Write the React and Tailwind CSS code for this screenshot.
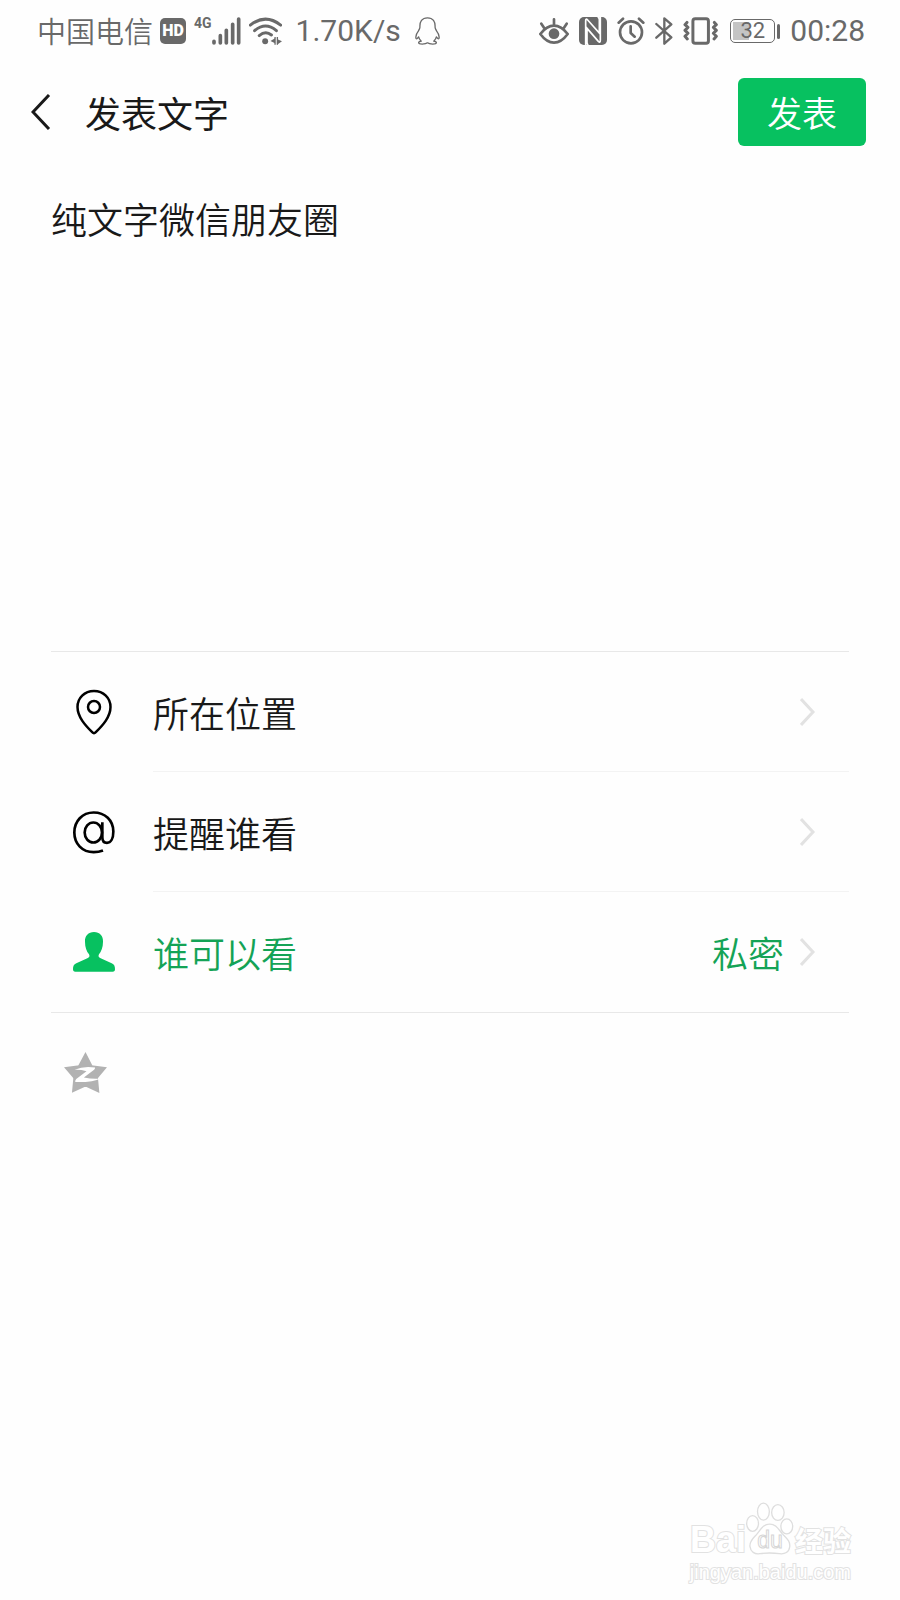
import { useState } from 'react';
import { clsx } from 'clsx';

const CJK = 'font-["Noto_Sans_CJK_SC",sans-serif]';
const LATIN = 'font-[Roboto,sans-serif]';

function SignalIcon() {
  return (
    <svg viewBox="0 0 87 84" className="h-7 w-[29px]" stroke="currentColor" strokeWidth="11" strokeLinecap="round" aria-hidden="true">
      <path d="M6 73v5M25 56v22M43 40v38M62 22v56M80 6v72" />
    </svg>
  );
}

function WifiIcon() {
  return (
    <svg viewBox="0 0 100 84" className="h-7 w-[33px]" fill="none" stroke="currentColor" aria-hidden="true">
      <path d="M4 24Q50-12 96 24M17 41Q50 13 83 41M31 56Q50 40 68 54" strokeWidth="9" strokeLinecap="round" />
      <circle cx="49" cy="73" r="9" fill="currentColor" stroke="none" />
      <path d="M79 60v24M86 60v24" strokeWidth="4" />
      <path d="M79 64v15L65 72zM86 67v16l14-10z" fill="currentColor" stroke="none" />
    </svg>
  );
}

function PenguinIcon() {
  return (
    <svg viewBox="0 0 76 84" className="h-7 w-[25px]" fill="none" stroke="currentColor" strokeWidth="4" strokeLinejoin="round" aria-hidden="true">
      <path d="M38 2C21 2 14 14 15 30c0 5-3 7-4 11C5 49 1 56 3 64c1 3 4 2 8-4 1 5 4 9 8 13-6 1-8 3-8 5 0 5 21 5 27 0 6 5 27 5 27 0 0-2-2-4-8-5 4-4 7-8 8-13 4 6 7 7 8 4 2-8-2-15-8-23-1-4-4-6-4-11C62 14 55 2 38 2z" />
    </svg>
  );
}

function EyeIcon() {
  return (
    <svg viewBox="0 0 90 84" className="h-7 w-[30px]" fill="none" stroke="currentColor" strokeWidth="8" strokeLinecap="round" aria-hidden="true">
      <path d="M4 51Q23 26 45 26t41 25Q67 77 45 77T4 51zM45 25V7M15 32L7 20M75 32l8-12" />
      <circle cx="45" cy="50" r="16" fill="currentColor" stroke="none" />
    </svg>
  );
}

function NfcIcon() {
  return (
    <svg viewBox="0 0 84 84" className="size-7" aria-hidden="true">
      <rect width="84" height="84" rx="15" fill="currentColor" />
      <path d="M20 84V12Q20 3 26 9l35 39V8Q61 2 56 0M28 84q-4-2-4-8V34l34 39q6 6 6-4V0" fill="none" stroke="#fff" strokeWidth="5" />
    </svg>
  );
}

function AlarmIcon() {
  return (
    <svg viewBox="0 0 84 84" className="size-7" fill="none" stroke="currentColor" strokeWidth="8" strokeLinecap="round" strokeLinejoin="round" aria-hidden="true">
      <circle cx="42" cy="46" r="33" />
      <path d="M41 28v20l12 11M5 17L18 5M79 17L66 5" />
    </svg>
  );
}

function BluetoothIcon() {
  return (
    <svg viewBox="0 0 54 84" className="h-7 w-[18px]" fill="none" stroke="currentColor" strokeWidth="7" strokeLinecap="round" strokeLinejoin="round" aria-hidden="true">
      <path d="M4 21l45 40-21 19V4l21 18L4 62" />
    </svg>
  );
}

function VibrateIcon() {
  return (
    <svg viewBox="0 0 106 84" className="h-7 w-[35px]" fill="none" stroke="currentColor" strokeWidth="9" strokeLinecap="round" strokeLinejoin="round" aria-hidden="true">
      <rect x="30" y="5" width="47" height="74" rx="7" />
      <path d="M12 16l-6 7 9 8-9 9 9 9-9 9 7 8M95 16l6 7-9 8 9 9-9 9 9 9-7 8" />
    </svg>
  );
}

function Battery({ level }) {
  return (
    <div className="ml-[2px] flex items-center gap-[2px]">
      <div className="relative flex h-6 w-[45px] items-center justify-center rounded-[5px] border border-[#696969]">
        <span className="absolute inset-y-[2px] left-[2px] border-r-2 border-[#c4c4c4] bg-[#c4c4c4]" style={{ width: `${level + 5}%` }} />
        <span className="relative text-[22px] leading-none">{level}</span>
      </div>
      <span className="h-[15px] w-[3px] rounded-xs bg-current" />
    </div>
  );
}

function StatusBar() {
  return (
    <div className={clsx(LATIN, 'flex h-[62px] items-center justify-between pr-[35px] pl-[37px] text-[30px] font-normal text-[#696969]')}>
      <div className="flex items-center">
        <span className={clsx(CJK, 'pb-[2px] text-[29px] leading-[42px] font-[350]')}>中国电信</span>
        <span className="ml-[7px] flex size-[26px] items-center justify-center rounded-[5px] bg-[#696969] text-base font-black text-white">HD</span>
        <span className="ml-2 pb-4 text-sm leading-none font-bold">4G</span>
        <SignalIcon />
        <span className="ml-2 flex">
          <WifiIcon />
        </span>
        <span className="mx-[14px] leading-10">1.70K/s</span>
        <PenguinIcon />
      </div>
      <div className="flex items-center gap-[10px]">
        <EyeIcon />
        <NfcIcon />
        <AlarmIcon />
        <BluetoothIcon />
        <VibrateIcon />
        <Battery level={32} />
        <span className="leading-10">00:28</span>
      </div>
    </div>
  );
}

function BackIcon() {
  return (
    <svg viewBox="0 0 20 36" className="h-9 w-5" fill="none" stroke="currentColor" strokeWidth="3" aria-hidden="true">
      <path d="M18 1L2 18l16 17" />
    </svg>
  );
}

function ChevronIcon() {
  return (
    <svg viewBox="0 0 16 28" className="h-7 w-4 text-[#e2e2e2]" fill="none" stroke="currentColor" strokeWidth="3" aria-hidden="true">
      <path d="M1 1l12 13-12 13" />
    </svg>
  );
}

function PinIcon() {
  return (
    <svg viewBox="0 0 36 46" className="h-[46px] w-9" fill="none" stroke="#000" strokeWidth="2.5" strokeLinejoin="round" aria-hidden="true">
      <path d="M18 2C8.500 2 1.500 9 1.500 18c0 10 8 18.500 14.700 25.200q1.800 2 3.600 0C26.500 36.500 34.500 28 34.500 18 34.500 9 27.500 2 18 2z" />
      <circle cx="18" cy="18" r="6" />
    </svg>
  );
}

function MentionIcon() {
  return (
    <svg viewBox="0 0 126 128" className="h-[43px] w-[42px]" fill="none" stroke="#000" strokeWidth="8" aria-hidden="true">
      <path d="M90 118Q77 123 62 123C28 123 4 98 4 64S28 4 62 4s59 23 59 57c0 22-8 34-19 34-10 0-14-7-14-17V33" />
      <ellipse cx="61" cy="64" rx="26" ry="30" />
    </svg>
  );
}

function PersonIcon() {
  return (
    <svg viewBox="0 0 126 120" className="h-10 w-[42px]" fill="#07c160" aria-hidden="true">
      <path d="M63 0c17 0 28 12 27 29 0 17-5 29-12 38-3 6-1 9 5 12l33 15c8 4 10 9 10 18 0 5-2 7-7 7H7c-5 0-7-2-7-7 0-9 2-14 10-18l33-15c6-3 8-6 5-12-7-9-12-21-12-38C35 12 46 0 63 0z" />
    </svg>
  );
}

function QzoneIcon() {
  return (
    <svg viewBox="0 0 130 124" className="h-[41px] w-[43px]" aria-hidden="true">
      <path d="M65 0l20 39q1 2 4 2l41 5-26 31q-2 2-1 5l4 42-39-18q-3-1-6 0l-38 17 4-42q0-3-2-5L0 46l40-5q3 0 4-2z" fill="#b2b2b2" />
      <path d="M32 54Q60 41 94 47q0 4-3 7L60 77q26 5 50 3-20 12-76 11-1-5 3-9l31-24q-18-5-36-4z" fill="#fff" />
    </svg>
  );
}

const ROWS = [
  { id: 'location', label: '所在位置', Icon: PinIcon },
  { id: 'remind', label: '提醒谁看', Icon: MentionIcon },
  { id: 'visible', label: '谁可以看', Icon: PersonIcon, value: '私密', active: true },
];

function OptionRow({ label, Icon, value, active, last }) {
  return (
    <li>
      <button type="button" className={clsx('flex w-full items-center text-left', active ? 'text-[#14a356]' : 'text-[#191919]')}>
        <span className="flex w-[86px] shrink-0 justify-center">
          <Icon />
        </span>
        <span className={clsx('ml-4 flex h-[120px] flex-1 items-center pr-[33px]', !last && 'border-b border-[#f3f3f3]')}>
          <span className="flex-1">{label}</span>
          {value && <span className="mr-4">{value}</span>}
          <ChevronIcon />
        </span>
      </button>
    </li>
  );
}

// Brand mark in the bottom corner, white letters with a faint outline
function Watermark() {
  return (
    <footer className="mt-auto flex flex-col items-end pr-[49px] pb-[14px] text-white [paint-order:stroke_fill] [-webkit-text-stroke:2px_#e2e2e2]">
      <div className="flex items-end">
        <span className='font-["Liberation_Sans",sans-serif] text-[36px] leading-9 font-bold'>Bai</span>
        <span className="relative flex h-14 w-12 items-end justify-center">
          <svg viewBox="0 0 146 168" className="absolute inset-0 h-full w-full [paint-order:normal]" fill="#fff" stroke="#dedede" strokeWidth="4" aria-hidden="true">
            <ellipse cx="20" cy="64" rx="18" ry="24" />
            <ellipse cx="53" cy="28" rx="18" ry="26" />
            <ellipse cx="97" cy="31" rx="19" ry="24" />
            <ellipse cx="124" cy="73" rx="18" ry="23" />
            <path d="M72 66c20 0 27 16 38 29 14 15 25 22 23 40-2 17-15 23-31 21-22-3-38-3-60 0-16 2-28-5-30-22-2-17 11-25 23-40 11-14 19-28 37-28z" />
          </svg>
          <span className='relative pb-[6px] font-["Liberation_Sans",sans-serif] text-[23px] leading-6 [paint-order:normal] [-webkit-text-stroke:1px_#d6d6d6]'>du</span>
        </span>
        <span className={clsx(CJK, 'ml-px pb-[2px] text-[28px] leading-8 font-bold')}>经验</span>
      </div>
      <span className='font-["Liberation_Sans",sans-serif] text-[20px] leading-7'>jingyan.baidu.com</span>
    </footer>
  );
}

export default function App() {
  const [text, setText] = useState('纯文字微信朋友圈');

  return (
    <div className={clsx(CJK, 'flex min-h-screen flex-col bg-[#fefefe] text-[36px] leading-[48px] font-[350] text-[#191919]')}>
      <StatusBar />

      <header className="flex h-[100px] items-center pr-[34px] pl-[31px]">
        <button type="button" aria-label="返回">
          <BackIcon />
        </button>
        <h1 className="ml-[34px] flex-1 font-normal">发表文字</h1>
        <button type="button" className="h-[68px] rounded-md bg-[#07c160] px-[29px] text-[35px] text-white">
          发表
        </button>
      </header>

      <main className="px-[51px] pt-8">
        <textarea
          aria-label="发表文字"
          value={text}
          onChange={(e) => setText(e.target.value)}
          className="block h-[457px] w-full resize-none outline-none"
        />

        <ul className="border-y border-[#e8e8e8]">
          {ROWS.map((row, i) => (
            <OptionRow key={row.id} {...row} last={i === ROWS.length - 1} />
          ))}
        </ul>

        <button type="button" aria-label="同步到QQ空间" className="mt-[39px] ml-[13px] block">
          <QzoneIcon />
        </button>
      </main>

      <Watermark />
    </div>
  );
}
